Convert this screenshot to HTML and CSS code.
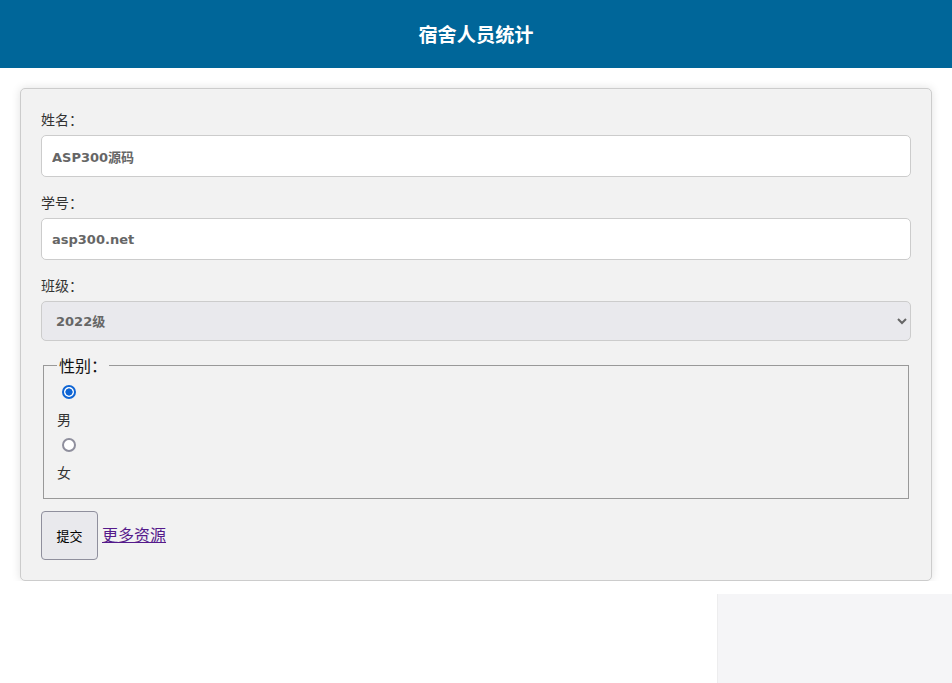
FILE: index.html
```html
<!DOCTYPE html>
<html lang="zh-CN">
<head>
<meta charset="utf-8">
<title>宿舍人员统计</title>
<link rel="stylesheet" href="styles.css">
</head>
<body>
<header class="topbar">
  <h1 class="title">宿舍人员统计</h1>
</header>
<main class="card">
  <form class="form">
    <label class="field-label" for="name">姓名：</label>
    <input class="field-input" id="name" type="text" value="ASP300源码">
    <label class="field-label" for="sid">学号：</label>
    <input class="field-input" id="sid" type="text" value="asp300.net">
    <label class="field-label" for="cls">班级：</label>
    <select class="field-select" id="cls">
      <option>2022级</option>
    </select>
    <fieldset class="gender">
      <legend class="gender-legend">性别：</legend>
      <input class="radio" type="radio" name="g" id="m" checked>
      <label class="radio-label" for="m">男</label>
      <input class="radio" type="radio" name="g" id="f">
      <label class="radio-label" for="f">女</label>
    </fieldset>
    <div class="actions">
      <button class="submit" type="button">提交</button>
      <a class="more" href="#">更多资源</a>
    </div>
  </form>
</main>
<div class="corner-box"></div>
</body>
</html>
```
FILE: styles.css
```css
html, body {
  margin: 0;
  padding: 0;
}
body {
  background: #ffffff;
  font-family: "DejaVu Sans", "Noto Sans CJK SC", sans-serif;
  color: #222;
}
.topbar {
  background: #006699;
  height: 68px;
  display: flex;
  align-items: center;
  justify-content: center;
}
.title {
  margin: 0;
  color: #ffffff;
  font-size: 19.2px;
  font-weight: bold;
  font-family: "Noto Sans CJK SC", sans-serif;
}
.card {
  margin: 20px 20px 0 20px;
  background: #f2f2f2;
  border: 1px solid #cccccc;
  border-radius: 5px;
  box-shadow: 0 0 10px rgba(0, 0, 0, 0.12);
  padding: 20px;
}
.form {
  display: flex;
  flex-direction: column;
  align-items: stretch;
}
.field-label {
  display: block;
  font-size: 14px;
  line-height: 21px;
  margin-bottom: 5px;
  font-family: "Noto Sans CJK SC", sans-serif;
  color: #333;
}
.field-input,
.field-select {
  box-sizing: border-box;
  width: 100%;
  height: 42px;
  padding: 0 10px;
  border: 1px solid #cccccc;
  border-radius: 5px;
  font-family: "DejaVu Sans", "Noto Sans CJK SC", sans-serif;
  font-weight: bold;
  font-size: 13px;
  color: #666666;
  margin: 0 0 15px 0;
  background: #ffffff;
}
.field-select {
  height: 40px;
  background-color: #e9e9ed;
  margin-bottom: 15px;
}
.gender {
  margin: 0 2px;
  border: 1px solid #999999;
  padding: 6px 13px 12px 13px;
  display: flex;
  flex-direction: column;
  align-items: flex-start;
}
.gender-legend {
  font-size: 16px;
  line-height: 18px;
  font-family: "Noto Sans CJK SC", sans-serif;
  color: #111;
  padding: 0 2px;
}
.radio {
  appearance: none;
  -webkit-appearance: none;
  box-sizing: border-box;
  margin: 5px 0 0 5px;
  width: 14px;
  height: 14px;
  border: 2px solid #8f8f9d;
  border-radius: 50%;
  background: #ffffff;
}
.radio:checked {
  border-color: #0f65d4;
  background: radial-gradient(circle, #0f65d4 0 3.3px, #ffffff 3.9px);
}
.radio-label {
  display: block;
  font-size: 14px;
  line-height: 21px;
  margin: 10px 0 3px 0;
  font-family: "Noto Sans CJK SC", sans-serif;
  color: #333;
}
.actions {
  margin-top: 12px;
  display: flex;
  align-items: center;
  gap: 4px;
}
.submit {
  padding: 15px 14.5px;
  font-size: 13px;
  font-family: "Noto Sans CJK SC", sans-serif;
  background: #e9e9ed;
  border: 1px solid #8f8f9d;
  border-radius: 4px;
  color: #000;
  line-height: 17px;
}
.more {
  font-size: 16px;
  line-height: 20px;
  color: #551a8b;
  font-family: "Noto Sans CJK SC", sans-serif;
  margin-top: -3px;
}
.corner-box {
  position: absolute;
  left: 717px;
  top: 594px;
  width: 235px;
  height: 89px;
  background: #f5f5f7;
  border-left: 1px solid #ededee;
}
```
